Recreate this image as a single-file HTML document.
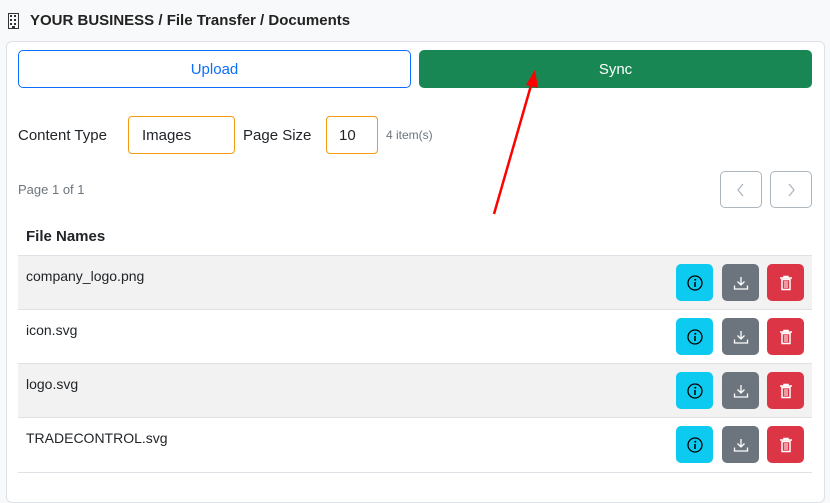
<!DOCTYPE html>
<html><head><style>
body{margin:0;width:830px;height:480px;overflow:hidden;background:#f8f9fa;font-family:"Liberation Sans",sans-serif;color:#212529;position:relative}
.abs{position:absolute}
.card{left:6px;top:41px;width:817px;height:460px;background:#fff;border:1px solid #dee2e6;border-radius:6px}
.btn{position:absolute;box-sizing:border-box;border-radius:5px;display:flex;align-items:center;justify-content:center;font-size:15px}
.inp{position:absolute;box-sizing:border-box;border:1px solid #f39c12;border-radius:4px;font-size:15px;padding-left:13px;display:flex;align-items:center}
.row{position:absolute;left:18px;width:794px;height:54px;border-top:1px solid #dee2e6;font-size:14px}
.row span{position:absolute;left:8px;top:12px}
.ib{position:absolute;top:8px;width:37px;height:37px;border-radius:5px;display:flex;align-items:center;justify-content:center}
</style></head><body>
<svg class="abs" style="left:8px;top:13px" width="11" height="16" viewBox="0 0 11 16"><rect x="0.5" y="0.5" width="10" height="15" fill="none" stroke="#333"/><g fill="#333"><rect x="2" y="2" width="2" height="2"/><rect x="6" y="2" width="2" height="2"/><rect x="2" y="6" width="2" height="2"/><rect x="6" y="6" width="2" height="2"/><rect x="2" y="10" width="2" height="2"/><rect x="6" y="10" width="2" height="2"/><rect x="4" y="13" width="3" height="3"/></g></svg>
<div class="abs" style="left:30px;top:12px;font-size:15px;font-weight:bold;color:#222">YOUR BUSINESS / File Transfer / Documents</div>
<div class="abs card"></div>
<div class="btn" style="left:18px;top:50px;width:393px;height:38px;border:1px solid #0d6efd;color:#0d6efd">Upload</div>
<div class="btn" style="left:419px;top:50px;width:393px;height:38px;background:#198754;color:#fff">Sync</div>
<div class="abs" style="left:18px;top:127px;font-size:15px">Content Type</div>
<div class="inp" style="left:128px;top:116px;width:107px;height:38px">Images</div>
<div class="abs" style="left:243px;top:127px;font-size:15px">Page Size</div>
<div class="inp" style="left:326px;top:116px;width:52px;height:38px;padding-left:12px">10</div>
<div class="abs" style="left:386px;top:128px;font-size:12px;color:#6c757d">4 item(s)</div>
<div class="abs" style="left:18px;top:182px;font-size:13px;color:#6c757d">Page 1 of 1</div>
<div class="btn" style="left:720px;top:171px;width:42px;height:37px;border:1px solid #adb5bd"><svg width="10" height="14"><path d="M7 1L2 7l5 6" fill="none" stroke="#adb5bd" stroke-width="1.3"/></svg></div>
<div class="btn" style="left:770px;top:171px;width:42px;height:37px;border:1px solid #adb5bd"><svg width="10" height="14"><path d="M3 1l5 6-5 6" fill="none" stroke="#adb5bd" stroke-width="1.3"/></svg></div>
<div class="abs" style="left:26px;top:228px;font-size:15px;font-weight:bold">File Names</div>
<div class="row" style="top:255px;background:#f2f2f2"><span>company_logo.png</span></div>
<div class="row" style="top:309px"><span>icon.svg</span></div>
<div class="row" style="top:363px;background:#f2f2f2"><span>logo.svg</span></div>
<div class="row" style="top:417px;border-bottom:1px solid #dee2e6"><span>TRADECONTROL.svg</span></div>
<div id="btns"></div>
<script>
var h='';[255,309,363,417].forEach(function(t){
h+='<div class="ib" style="left:676px;top:'+(t+9)+'px;background:#0dcaf0"><svg width="16" height="16"><circle cx="8" cy="8" r="7" fill="none" stroke="#000" stroke-width="1.3"/><circle cx="8.3" cy="4.8" r="1" fill="#000"/><path d="M8 7v5" stroke="#000" stroke-width="1.5"/></svg></div>';
h+='<div class="ib" style="left:722px;top:'+(t+9)+'px;background:#6c757d"><svg width="16" height="16"><path d="M8 2v8M4.5 6.5L8 10l3.5-3.5M1.5 10.5v3.5h13v-3.5" fill="none" stroke="#fff" stroke-width="1.3"/></svg></div>';
h+='<div class="ib" style="left:767px;top:'+(t+9)+'px;background:#dc3545"><svg width="14" height="16"><path d="M1 3h12M5 3V1.5h4V3" fill="none" stroke="#fff" stroke-width="1.5"/><rect x="3" y="4.5" width="8" height="10" fill="none" stroke="#fff" stroke-width="1.5"/><path d="M6 6v7M8 6v7" stroke="#fff"/></svg></div>';
});document.getElementById('btns').innerHTML=h;
</script>
<svg class="abs" style="left:0;top:0" width="830" height="480"><path d="M494 214L532 82" stroke="#f00" stroke-width="2.5"/><path d="M535 70L538 88 526 85z" fill="#f00"/></svg>
</body></html>
